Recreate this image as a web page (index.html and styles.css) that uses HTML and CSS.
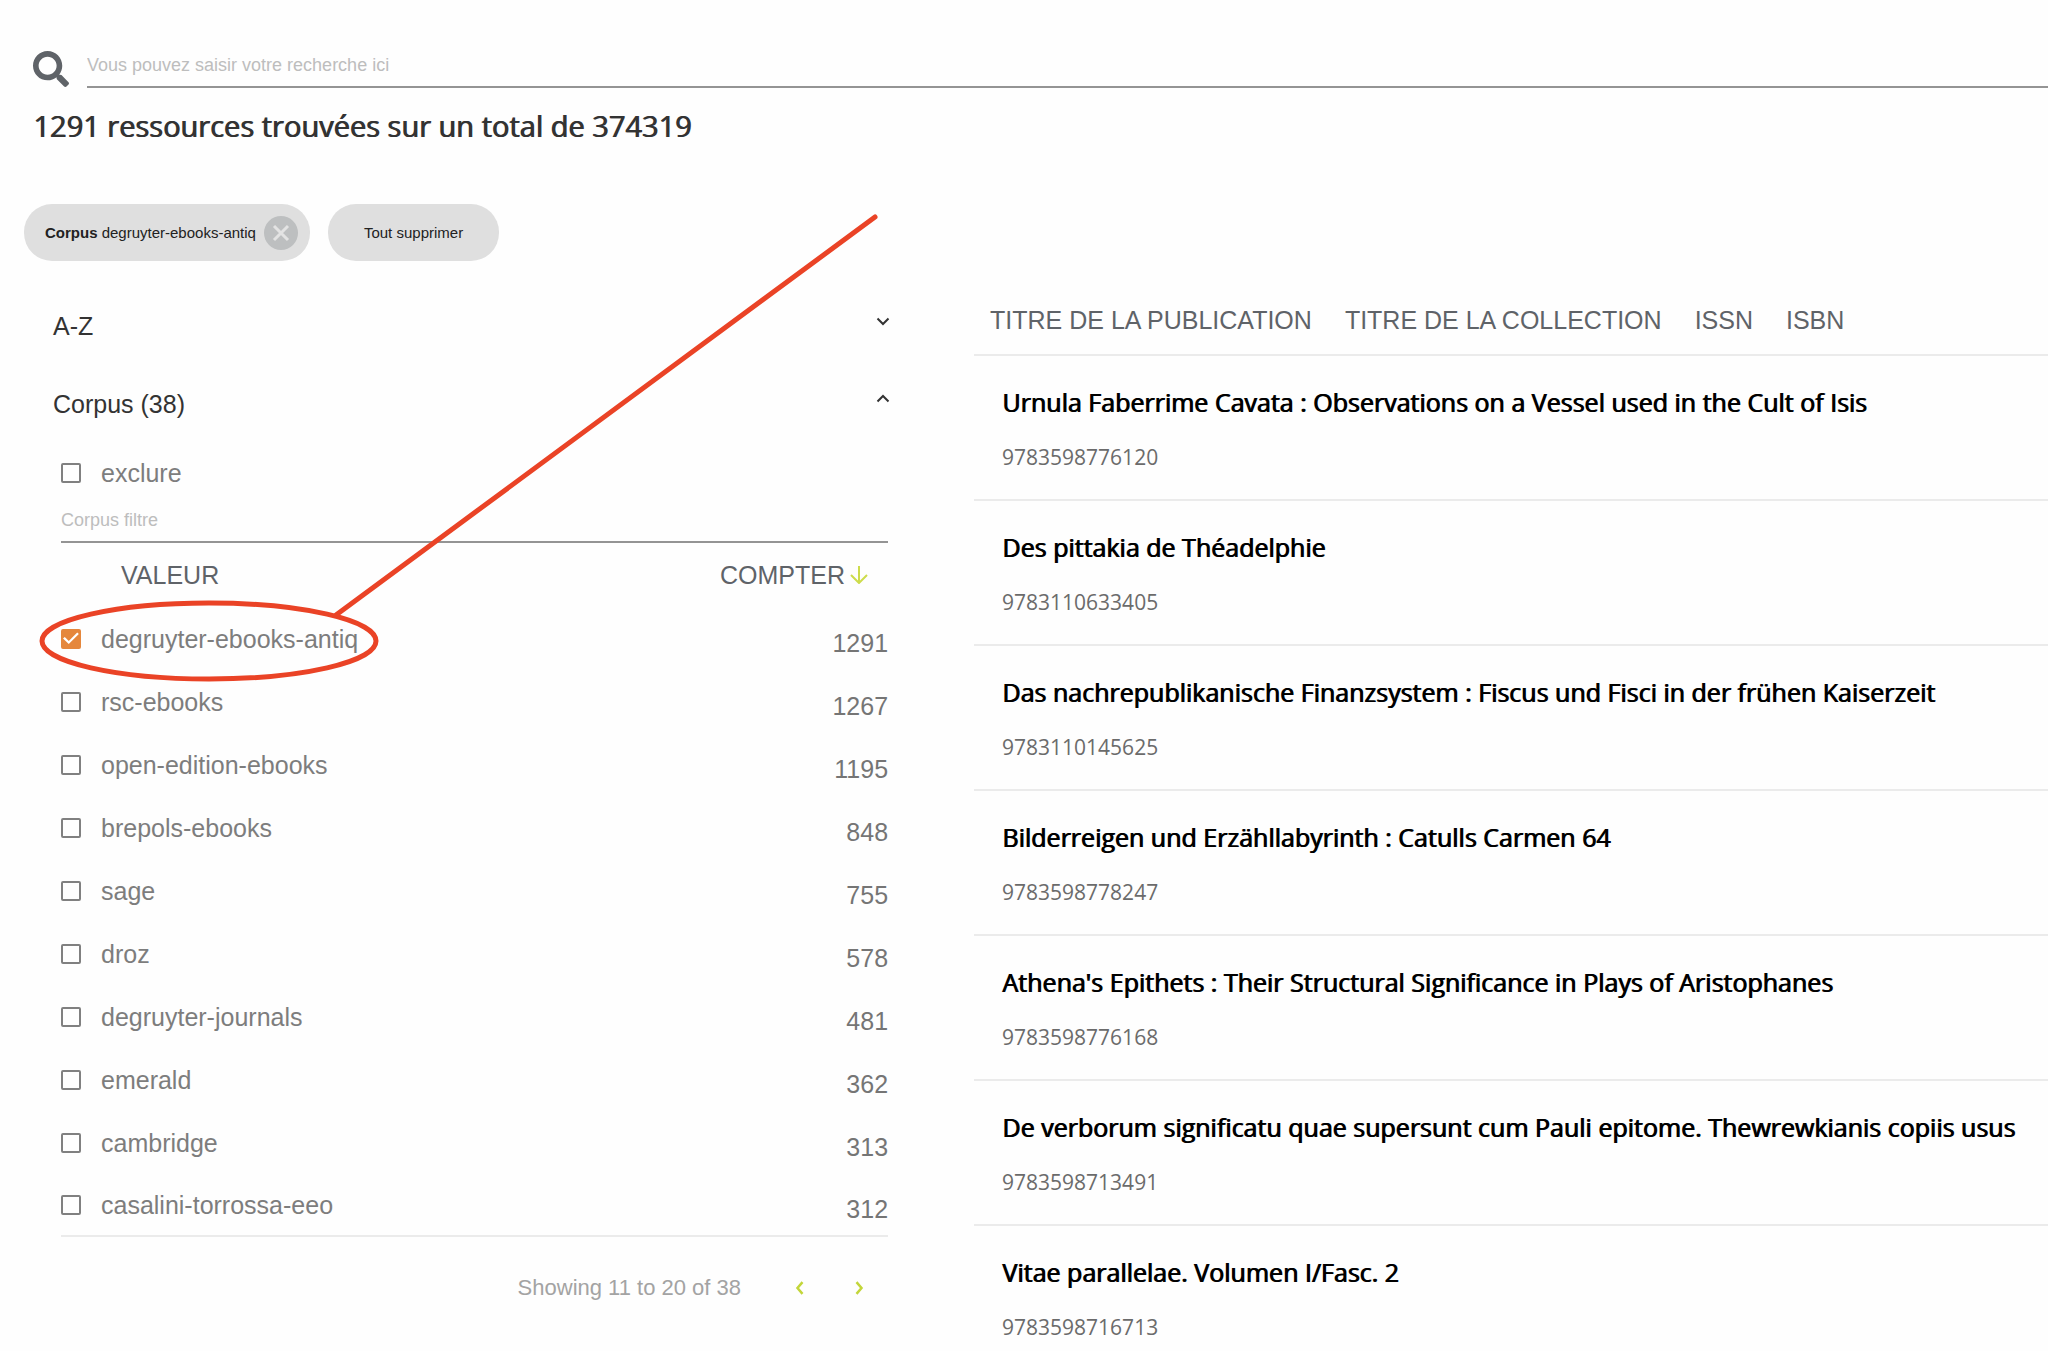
FILE: index.html
```html
<!DOCTYPE html>
<html lang="fr">
<head>
<meta charset="utf-8">
<meta name="viewport" content="width=device-width, initial-scale=1">
<title>Recherche de ressources</title>
<link rel="stylesheet" href="styles.css">
</head>
<body>
<div class="page">
  <header class="top">
    <form class="search" role="search">
      <svg class="search-icon" viewBox="0 0 512 512" aria-hidden="true"><path d="M505 442.7L405.3 343c-4.5-4.5-10.6-7-17-7H372c27.6-35.3 44-79.7 44-128C416 93.1 322.9 0 208 0S0 93.1 0 208s93.1 208 208 208c48.3 0 92.7-16.4 128-44v16.3c0 6.4 2.5 12.5 7 17l99.7 99.7c9.4 9.4 24.6 9.4 33.9 0l28.3-28.3c9.4-9.4 9.4-24.6.1-34zM208 336c-70.7 0-128-57.2-128-128 0-70.7 57.2-128 128-128 70.7 0 128 57.2 128 128 0 70.7-57.2 128-128 128z"/></svg>
      <input class="field" type="text" aria-label="Recherche" placeholder="Vous pouvez saisir votre recherche ici">
    </form>
    <h1 class="summary">1291 ressources trouvées sur un total de 374319</h1>
    <div class="chips">
      <div class="chip">
        <span><b>Corpus</b> degruyter-ebooks-antiq</span>
        <button class="chip-remove" type="button" aria-label="Supprimer le filtre">
          <svg viewBox="0 0 34 34" aria-hidden="true"><circle cx="17" cy="17" r="17"/><path d="M10 10l14 14M24 10L10 24"/></svg>
        </button>
      </div>
      <button class="chip chip-clear" type="button">Tout supprimer</button>
    </div>
  </header>

  <main class="columns">
    <aside class="facets">
      <button class="facet" type="button" aria-expanded="false">A-Z
        <svg class="chevron" viewBox="0 0 20 20" aria-hidden="true"><path d="M4.500 7.500l5.500 5.500 5.500-5.500"/></svg>
      </button>
      <button class="facet" type="button" aria-expanded="true">Corpus (38)
        <svg class="chevron" viewBox="0 0 20 20" aria-hidden="true"><path d="M4.500 12.500l5.500-5.500 5.500 5.500"/></svg>
      </button>
      <div class="facet-body">
        <label class="option"><input type="checkbox">exclure</label>
        <input class="field facet-filter" type="text" aria-label="Corpus filtre" placeholder="Corpus filtre">
        <table class="values">
          <thead>
            <tr>
              <th><button class="sort" type="button">VALEUR</button></th>
              <th><button class="sort" type="button">COMPTER<svg class="arrow" viewBox="0 0 18 18" aria-hidden="true"><path d="M9 0v17M1 9l8 8 8-8"/></svg></button></th>
            </tr>
          </thead>
          <tbody>
            <tr><td><label class="option"><input type="checkbox" checked>degruyter-ebooks-antiq</label></td><td>1291</td></tr>
            <tr><td><label class="option"><input type="checkbox">rsc-ebooks</label></td><td>1267</td></tr>
            <tr><td><label class="option"><input type="checkbox">open-edition-ebooks</label></td><td>1195</td></tr>
            <tr><td><label class="option"><input type="checkbox">brepols-ebooks</label></td><td>848</td></tr>
            <tr><td><label class="option"><input type="checkbox">sage</label></td><td>755</td></tr>
            <tr><td><label class="option"><input type="checkbox">droz</label></td><td>578</td></tr>
            <tr><td><label class="option"><input type="checkbox">degruyter-journals</label></td><td>481</td></tr>
            <tr><td><label class="option"><input type="checkbox">emerald</label></td><td>362</td></tr>
            <tr><td><label class="option"><input type="checkbox">cambridge</label></td><td>313</td></tr>
            <tr><td><label class="option"><input type="checkbox">casalini-torrossa-eeo</label></td><td>312</td></tr>
          </tbody>
        </table>
        <nav class="pager" aria-label="Pagination">
          <span class="pager-text">Showing 11 to 20 of 38</span>
          <button type="button" aria-label="Page précédente"><svg viewBox="0 0 24 24" aria-hidden="true"><path d="M15 5l-6 7 6 7"/></svg></button>
          <button type="button" aria-label="Page suivante"><svg viewBox="0 0 24 24" aria-hidden="true"><path d="M9 5l6 7-6 7"/></svg></button>
        </nav>
      </div>
    </aside>

    <section class="results">
      <div class="sorts">
        <button class="sort" type="button">TITRE DE LA PUBLICATION</button>
        <button class="sort" type="button">TITRE DE LA COLLECTION</button>
        <button class="sort" type="button">ISSN</button>
        <button class="sort" type="button">ISBN</button>
      </div>
      <ul class="list">
        <li><a href="#r1">Urnula Faberrime Cavata : Observations on a Vessel used in the Cult of Isis</a><p>9783598776120</p></li>
        <li><a href="#r2">Des pittakia de Théadelphie</a><p>9783110633405</p></li>
        <li><a href="#r3">Das nachrepublikanische Finanzsystem : Fiscus und Fisci in der frühen Kaiserzeit</a><p>9783110145625</p></li>
        <li><a href="#r4">Bilderreigen und Erzähllabyrinth : Catulls Carmen 64</a><p>9783598778247</p></li>
        <li><a href="#r5">Athena's Epithets : Their Structural Significance in Plays of Aristophanes</a><p>9783598776168</p></li>
        <li><a href="#r6">De verborum significatu quae supersunt cum Pauli epitome. Thewrewkianis copiis usus</a><p>9783598713491</p></li>
        <li><a href="#r7">Vitae parallelae. Volumen I/Fasc. 2</a><p>9783598716713</p></li>
      </ul>
    </section>
  </main>

  <svg class="annotation" viewBox="0 0 900 700" aria-hidden="true">
    <ellipse cx="209" cy="641" rx="167" ry="38"/>
    <path d="M336 615L875 217"/>
  </svg>
</div>
</body>
</html>
```
FILE: styles.css
```css
* {
  box-sizing: border-box;
}

body {
  margin: 0;
  background: #fefefe;
  color: #333;
  font: 25px/30px "Liberation Sans", Arial, sans-serif;
}

button {
  padding: 0;
  border: 0;
  background: none;
  color: inherit;
  font: inherit;
  cursor: pointer;
}

svg {
  display: block;
  flex: none;
  fill: none;
}

.page {
  position: relative;
}

/* Search and active filters */

.search {
  display: flex;
  align-items: flex-end;
  gap: 18px;
  padding: 44px 0 0 33px;
}

.search-icon {
  width: 36px;
  height: 36px;
  margin-bottom: 1px;
  fill: #5f6368;
}

.field {
  flex: 1;
  height: 44px;
  min-width: 0;
  padding: 0;
  border: 0;
  border-bottom: 2px solid #949494;
  background: none;
  font: inherit;
  font-size: 18px;
  outline: none;
}

.field::placeholder {
  color: #bdbdbd;
  opacity: 1;
}

.summary {
  margin: 18px 0 58px 33px;
  font: 400 29px/40px "Open Sans", sans-serif;
  text-shadow: 1px 0 0 #333;
}

.chips {
  display: flex;
  gap: 18px;
  padding-left: 24px;
}

.chip {
  display: flex;
  align-items: center;
  gap: 8px;
  height: 57px;
  padding: 0 12px 0 21px;
  border-radius: 28px;
  background: #dfdfdf;
  color: #222;
  font-size: 15px;
}

.chip-clear {
  padding: 0 36px;
}

.chip-remove svg {
  width: 34px;
  height: 34px;
}

.chip-remove circle {
  fill: #bdbfc0;
}

.chip-remove path {
  stroke: #e3e3e3;
  stroke-width: 3;
}

.columns {
  display: grid;
  grid-template-columns: 39fr 43fr;
}

/* Facets */

.facets {
  padding: 24px 81px 0 53px;
}

.facet {
  display: flex;
  justify-content: space-between;
  align-items: flex-start;
  width: 100%;
  padding: 26px 0 22px;
  text-align: left;
}

.chevron {
  width: 20px;
  height: 20px;
  stroke: #333;
  stroke-width: 2;
}

.facet-body {
  padding: 17px 5px 0 8px;
}

.option {
  display: flex;
  align-items: center;
  gap: 20px;
  color: #7d7d7d;
}

.option input {
  appearance: none;
  display: grid;
  width: 20px;
  height: 20px;
  margin: 0;
  border: 2px solid #808080;
  border-radius: 2px;
}

.option input:checked {
  border-color: #e5873c;
  background: #e5873c;
}

.option input:checked::before {
  content: "";
  background: #fff;
  clip-path: polygon(0 50%, 11% 40%, 36% 65%, 89% 12%, 99% 22%, 36% 85%);
}

.facet-filter {
  display: block;
  width: 100%;
  height: 45px;
  margin-top: 10px;
  padding-top: 2px;
}

.values {
  width: 100%;
  border-collapse: separate;
  border-spacing: 0;
}

.values th {
  padding: 17px 20px 17px 60px;
  font-weight: 400;
  text-align: left;
}

.values th + th {
  padding-left: 0;
}

.values td {
  height: 63px;
  padding: 0;
}

.values td + td {
  padding-top: 8px;
  color: #757575;
}

.values td + td,
.values th + th {
  text-align: right;
}

.values tbody tr:last-child td {
  border-bottom: 2px solid #ebebeb;
}

.sort {
  display: inline-flex;
  align-items: center;
  gap: 5px;
  color: #5f6368;
  vertical-align: top;
}

.arrow {
  width: 18px;
  height: 18px;
  stroke: #cddc4b;
  stroke-width: 2;
}

.pager {
  display: flex;
  justify-content: flex-end;
  align-items: center;
  gap: 35px;
  padding: 36px 17px 0 0;
}

.pager-text {
  margin-right: 12px;
  color: #a3a3a3;
  font-size: 22px;
}

.pager svg {
  width: 24px;
  height: 24px;
  padding: 2px;
  stroke: #c3d63a;
  stroke-width: 3;
}

/* Results */

.results {
  padding-top: 44px;
}

.sorts {
  display: flex;
  gap: 33px;
  padding: 0 16px 19px;
  border-bottom: 2px solid #ebebeb;
}

.list {
  margin: 0;
  padding: 0;
  list-style: none;
  font-family: "Open Sans", sans-serif;
}

.list li {
  padding: 28px 0 28px 28px;
  border-bottom: 2px solid #ebebeb;
}

.list li:last-child {
  padding-bottom: 0;
  border-bottom: 0;
}

.list a {
  display: block;
  color: #000;
  font-size: 25px;
  line-height: 36px;
  text-decoration: none;
  text-shadow: 1px 0 0 #000;
}

.list p {
  margin: 23px 0 0;
  color: #6b6b6b;
  font-size: 21px;
  line-height: 28px;
}

/* Hand-drawn marker over the selected value */

.annotation {
  position: absolute;
  top: 0;
  left: 0;
  width: 900px;
  height: 700px;
  stroke: #ea4326;
  stroke-width: 5;
  stroke-linecap: round;
  pointer-events: none;
}
```
